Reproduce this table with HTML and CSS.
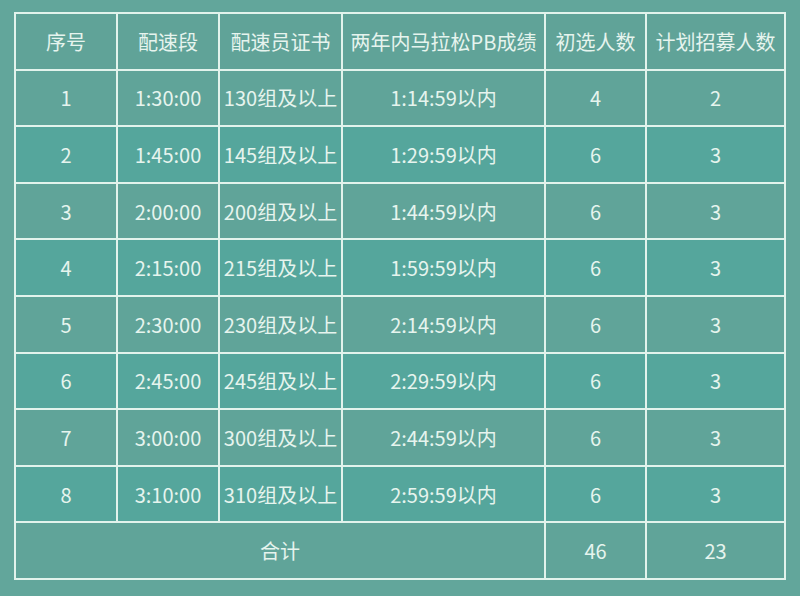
FILE: index.html
```html
<!DOCTYPE html>
<html lang="zh">
<head>
<meta charset="utf-8">
<link rel="stylesheet" href="styles.css">
</head>
<body>
<div class="page">
<table class="pace">
<colgroup>
<col class="c1"><col class="c2"><col class="c3"><col class="c4"><col class="c5"><col class="c6">
</colgroup>
<thead>
<tr><th>序号</th><th>配速段</th><th>配速员证书</th><th>两年内马拉松PB成绩</th><th>初选人数</th><th>计划招募人数</th></tr>
</thead>
<tbody>
<tr class="odd"><td>1</td><td>1:30:00</td><td>130组及以上</td><td>1:14:59以内</td><td>4</td><td>2</td></tr>
<tr class="even"><td>2</td><td>1:45:00</td><td>145组及以上</td><td>1:29:59以内</td><td>6</td><td>3</td></tr>
<tr class="odd"><td>3</td><td>2:00:00</td><td>200组及以上</td><td>1:44:59以内</td><td>6</td><td>3</td></tr>
<tr class="even"><td>4</td><td>2:15:00</td><td>215组及以上</td><td>1:59:59以内</td><td>6</td><td>3</td></tr>
<tr class="odd"><td>5</td><td>2:30:00</td><td>230组及以上</td><td>2:14:59以内</td><td>6</td><td>3</td></tr>
<tr class="even"><td>6</td><td>2:45:00</td><td>245组及以上</td><td>2:29:59以内</td><td>6</td><td>3</td></tr>
<tr class="odd"><td>7</td><td>3:00:00</td><td>300组及以上</td><td>2:44:59以内</td><td>6</td><td>3</td></tr>
<tr class="even"><td>8</td><td>3:10:00</td><td>310组及以上</td><td>2:59:59以内</td><td>6</td><td>3</td></tr>
<tr class="odd"><td colspan="4">合计</td><td>46</td><td>23</td></tr>
</tbody>
</table>
</div>
</body>
</html>
```
FILE: styles.css
```css
html, body {
  margin: 0;
  padding: 0;
  background: #62a69b;
}
body {
  width: 800px;
  height: 596px;
  overflow: hidden;
  font-family: "Noto Sans CJK SC", "Noto Sans", sans-serif;
  color: #e6f4ee;
}
.page {
  padding: 12px 0 0 14px;
}
.pace {
  border-collapse: collapse;
  table-layout: fixed;
  width: 770px;
  border: 2px solid #e2f3ec;
}
.c1 { width: 102px; }
.c2 { width: 102px; }
.c3 { width: 123px; }
.c4 { width: 203px; }
.c5 { width: 101px; }
.c6 { width: 139px; }
.pace tr {
  height: 56.6px;
}
.pace th, .pace td {
  border: 2px solid #e2f3ec;
  padding: 0;
  text-align: center;
  vertical-align: middle;
  font-size: 20px;
  font-weight: 400;
  white-space: nowrap;
}
.pace thead tr { background: #60a398; }
.odd { background: #60a499; }
.even { background: #55a69c; }
```
